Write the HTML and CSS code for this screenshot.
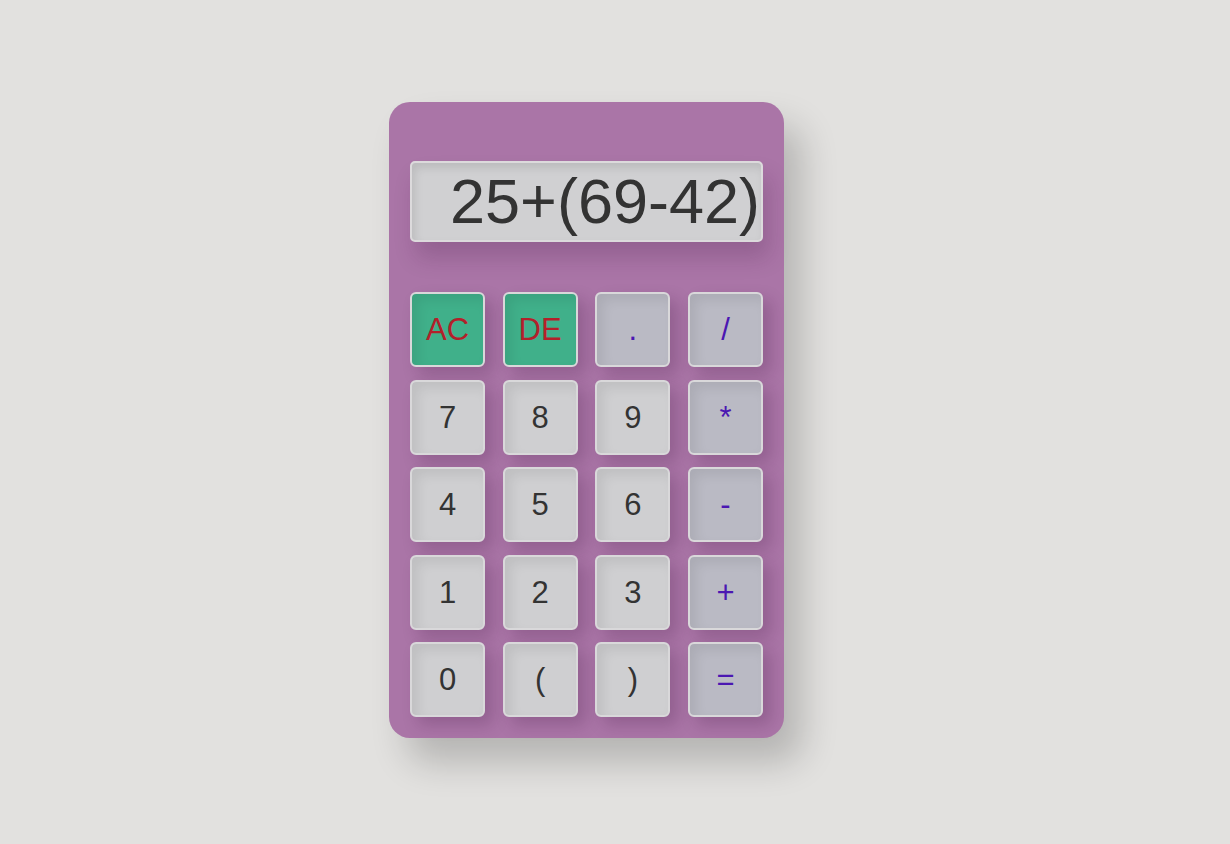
FILE: index.html
```html
<!DOCTYPE html>
<html>
<head>
<meta charset="utf-8">
<link rel="stylesheet" href="styles.css">
</head>
<body>
<div class="calc">
  <div class="display">25+(69-42)</div>
  <div class="keys">
    <button class="key fn">AC</button>
    <button class="key fn">DE</button>
    <button class="key op">.</button>
    <button class="key op">/</button>
    <button class="key">7</button>
    <button class="key">8</button>
    <button class="key">9</button>
    <button class="key op">*</button>
    <button class="key">4</button>
    <button class="key">5</button>
    <button class="key">6</button>
    <button class="key op">-</button>
    <button class="key">1</button>
    <button class="key">2</button>
    <button class="key">3</button>
    <button class="key op">+</button>
    <button class="key">0</button>
    <button class="key">(</button>
    <button class="key">)</button>
    <button class="key op">=</button>
  </div>
</div>
</body>
</html>
```
FILE: styles.css
```css
html {
  background: #e2e1df;
}
body {
  margin: 0;
  min-height: 844px;
  box-sizing: border-box;
  padding: 102px 0 0 389px;
  font-family: "Liberation Sans", Arial, sans-serif;
}
.calc {
  width: 395px;
  height: 636px;
  box-sizing: border-box;
  padding: 59px 21px 21px 21px;
  background: #aa75a7;
  border-radius: 21px;
  box-shadow: 18px 24px 36px rgba(0, 0, 0, 0.2);
}
.display {
  height: 81px;
  box-sizing: border-box;
  border: 2px solid #dcdadc;
  border-radius: 5px;
  background: #d0d0d2;
  box-shadow: inset 3px 5px 8px rgba(0, 0, 0, 0.1), 6px 16px 22px rgba(60, 20, 60, 0.2);
  color: #333333;
  font-size: 63px;
  line-height: 77px;
  text-align: right;
  padding-right: 1px;
  overflow: hidden;
  white-space: nowrap;
}
.keys {
  margin-top: 50px;
  display: grid;
  grid-template-columns: repeat(4, 75px);
  grid-auto-rows: 75px;
  column-gap: 17.67px;
  row-gap: 12.5px;
}
.key {
  box-sizing: border-box;
  border: 2px solid #d9d8da;
  border-radius: 6px;
  background: #cfcfd1;
  color: #333333;
  font-family: "Liberation Sans", Arial, sans-serif;
  font-size: 31px;
  line-height: 1;
  padding: 0;
  margin: 0;
  box-shadow: inset 6px 6px 12px rgba(0, 0, 0, 0.08), 8px 8px 16px rgba(60, 20, 60, 0.22);
}
.key.fn {
  background: #40b08a;
  color: #b3202a;
}
.key.op {
  background: #babac4;
  color: #4b17b2;
}
```
